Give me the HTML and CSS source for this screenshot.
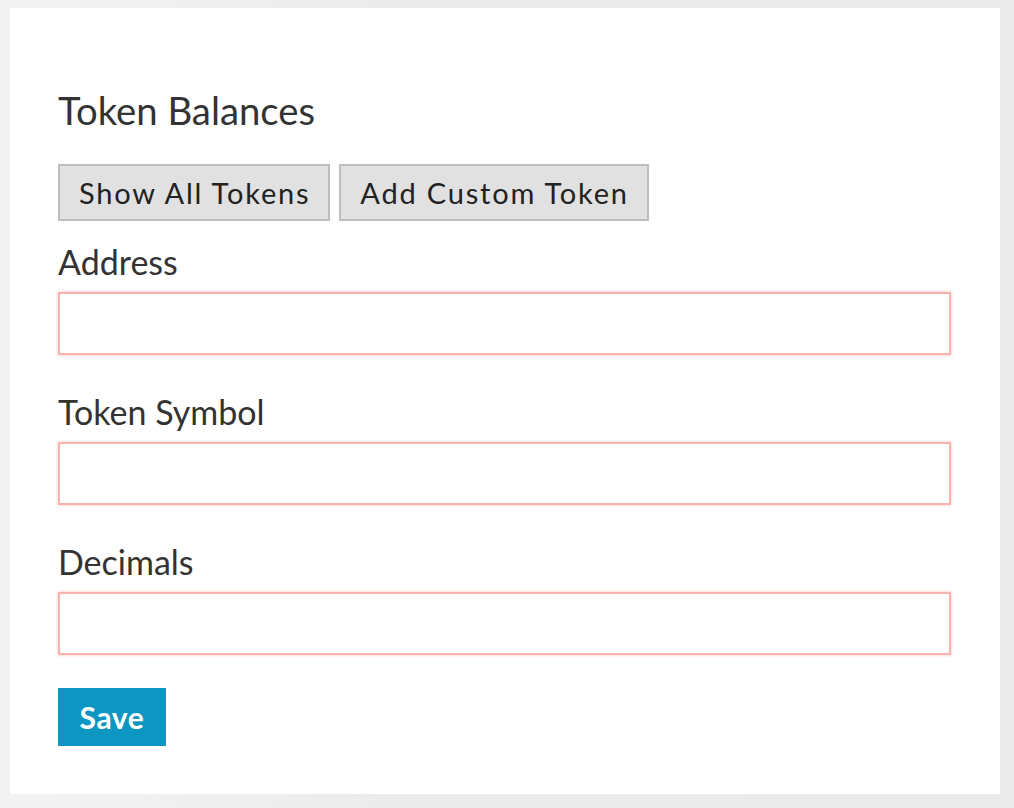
FILE: index.html
```html
<!DOCTYPE html>
<html>
<head>
<meta charset="utf-8">
<link rel="stylesheet" href="styles.css">
</head>
<body>
<div class="card">
  <h1 class="title">Token Balances</h1>
  <div class="actions">
    <button class="btn">Show All Tokens</button>
    <button class="btn">Add Custom Token</button>
  </div>
  <label class="label first">Address</label>
  <input class="field" type="text">
  <label class="label">Token Symbol</label>
  <input class="field" type="text">
  <label class="label">Decimals</label>
  <input class="field" type="text">
  <button class="save">Save</button>
</div>
</body>
</html>
```
FILE: styles.css
```css
html, body {
  margin: 0;
  padding: 0;
}
body {
  background: linear-gradient(90deg, #f3f3f3 0%, #ebebeb 40%, #eaeaea 100%);
  font-family: Lato, "Open Sans", sans-serif;
  color: #333;
  height: 808px;
  overflow: hidden;
}
.card {
  box-sizing: border-box;
  margin: 8px 14px 0 10px;
  width: 990px;
  height: 786px;
  background: #fff;
  padding: 82px 49px 0 48px;
  display: flex;
  flex-direction: column;
  align-items: flex-start;
}
.title {
  margin: 0;
  font-size: 38.3px;
  font-weight: 400;
  line-height: 40px;
}
.actions {
  margin-top: 34px;
  display: flex;
  gap: 9px;
}
.btn {
  font-family: Lato, sans-serif;
  font-size: 29px;
  letter-spacing: 1.8px;
  color: #222;
  background: #e1e1e1;
  border: 2px solid #bdbdbd;
  height: 57px;
  padding: 0 18px 0 19px;
  margin: 0;
}
.label {
  margin-top: 37px;
  font-size: 34px;
  line-height: 40px;
}
.label.first {
  margin-top: 21px;
}
.field {
  box-sizing: border-box;
  margin: 10px 0 0 0;
  width: 893px;
  height: 63px;
  border: 2px solid #f8b3ae;
  box-shadow: 0 0 3px rgba(248, 150, 140, 0.6);
  background: #fff;
  outline: none;
  padding: 0 12px;
  font-size: 26px;
}
.save {
  margin-top: 33px;
  width: 108px;
  height: 58px;
  border: none;
  background: #0e96c2;
  color: #fff;
  font-family: Lato, sans-serif;
  font-weight: 700;
  font-size: 30px;
  letter-spacing: 0.6px;
  padding: 0;
}
```
